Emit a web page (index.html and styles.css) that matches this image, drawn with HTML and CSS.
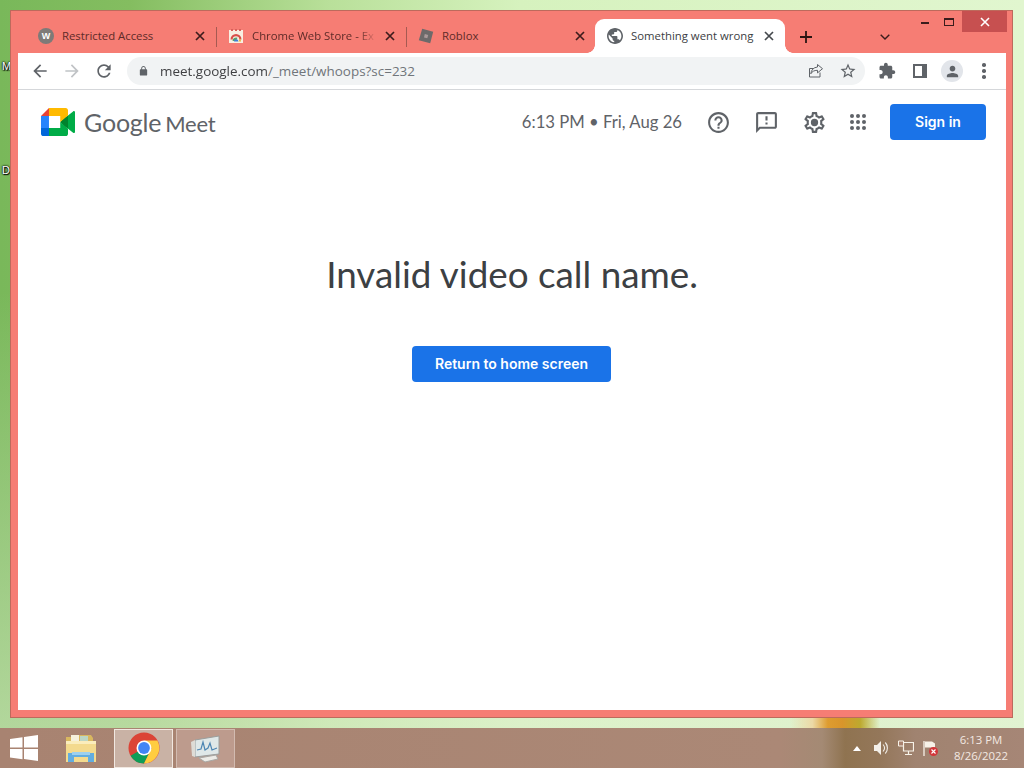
FILE: index.html
```html
<!DOCTYPE html>
<html lang="en">
<head>
<meta charset="utf-8">
<title>Something went wrong</title>
<link rel="stylesheet" href="styles.css">
</head>
<body>
<div class="screen">
  <main class="desktop">
    <span class="desk-label desk-label-m">M</span>
    <span class="desk-label desk-label-d">D</span>
    <div class="blob"></div>
    <section class="window">
      <div class="winctl">
        <span class="winbtn"><span class="min-glyph"></span></span>
        <span class="winbtn"><span class="max-glyph"></span></span>
        <span class="winbtn winbtn-close"><svg viewBox="0 0 10 10" width="10" height="10"><path d="M1 1l8 8M9 1l-8 8" stroke="#fff" stroke-width="1.6"/></svg></span>
      </div>
      <div class="tabstrip">
        <div class="tab">
          <span class="fav-w">W</span>
          <span class="tab-title">Restricted Access</span>
          <svg class="tab-x" viewBox="0 0 10 10"><path d="M1 1l8 8M9 1l-8 8"/></svg>
        </div>
        <div class="tab">
          <svg class="fav" viewBox="0 0 16 16"><rect x="1" y="2" width="14" height="13" fill="#f8efe2"/><path d="M3 1h2v2H3zM7 1h2v2H7zM11 1h2v2h-2z" fill="#d9605a"/><path d="M2.500 11.500a5.500 5.500 0 0 1 11 0h-2.200a3.300 3.300 0 0 0-6.600 0z" fill="#d8504a"/><path d="M4.500 13a3.500 3.500 0 0 1 5-3.200L8 13z" fill="#5aa16a"/><path d="M6 13.500a2.200 2.200 0 0 1 4.400 0z" fill="#3f7fd8"/><path d="M10.400 13.500h2.600a4 4 0 0 0-1-3z" fill="#e8b93b"/></svg>
          <span class="tab-title tab-fade">Chrome Web Store - Ex</span>
          <svg class="tab-x" viewBox="0 0 10 10"><path d="M1 1l8 8M9 1l-8 8"/></svg>
        </div>
        <div class="tab">
          <svg class="fav" viewBox="0 0 16 16"><path d="M4.200 .8L15.200 3.800 12.200 15.200 .8 12.200z" fill="#6d6a6a"/><path d="M6.800 6L10.200 6.900 9.300 10.200 6 9.400z" fill="#a99"/></svg>
          <span class="tab-title">Roblox</span>
          <svg class="tab-x" viewBox="0 0 10 10"><path d="M1 1l8 8M9 1l-8 8"/></svg>
        </div>
        <div class="tab tab-active">
          <svg class="fav" viewBox="2 2 20 20"><path fill="#5f6368" d="M12 2C6.480 2 2 6.480 2 12s4.480 10 10 10 10-4.480 10-10S17.520 2 12 2zm-1 17.930c-3.950-.49-7-3.850-7-7.930 0-.62.08-1.210.21-1.790L9 15v1c0 1.100.9 2 2 2v1.930zm6.900-2.540c-.26-.81-1-1.390-1.900-1.390h-1v-3c0-.55-.45-1-1-1H8v-2h2c.55 0 1-.45 1-1V7h2c1.100 0 2-.9 2-2v-.41c2.930 1.190 5 4.060 5 7.410 0 2.080-.8 3.970-2.100 5.390z"/></svg>
          <span class="tab-title">Something went wrong</span>
          <svg class="tab-x" viewBox="0 0 10 10"><path d="M1 1l8 8M9 1l-8 8"/></svg>
        </div>
        <svg class="newtab" viewBox="0 0 12 12"><path d="M6 0v12M0 6h12"/></svg>
        <svg class="tabsearch" viewBox="0 0 10 6"><path d="M.7 .7L5 5l4.300-4.300"/></svg>
      </div>
      <div class="toolbar">
        <svg class="tool tool-nav" viewBox="0 0 24 24"><path d="M20 11H7.830l5.590-5.590L12 4l-8 8 8 8 1.410-1.410L7.830 13H20v-2z"/></svg>
        <svg class="tool tool-nav tool-off" viewBox="0 0 24 24"><path d="M12 4l-1.410 1.410L16.170 11H4v2h12.170l-5.580 5.590L12 20l8-8z"/></svg>
        <svg class="tool tool-nav" viewBox="0 0 24 24"><path d="M17.650 6.350C16.200 4.900 14.210 4 12 4c-4.420 0-7.990 3.580-7.990 8s3.570 8 7.990 8c3.730 0 6.840-2.550 7.730-6h-2.080c-.82 2.330-3.040 4-5.650 4-3.310 0-6-2.690-6-6s2.690-6 6-6c1.660 0 3.140.69 4.220 1.780L13 11h7V4l-2.350 2.350z"/></svg>
        <div class="omnibox">
          <svg class="lock" viewBox="0 0 24 24"><path d="M18 8h-1V6c0-2.760-2.240-5-5-5S7 3.240 7 6v2H6c-1.100 0-2 .9-2 2v10c0 1.100.9 2 2 2h12c1.100 0 2-.9 2-2V10c0-1.100-.9-2-2-2zM9 6c0-1.660 1.340-3 3-3s3 1.340 3 3v2H9V6z"/></svg>
          <span class="url"><span class="url-host">meet.google.com</span>/_meet/whoops?sc=232</span>
          <svg class="share" viewBox="0 0 16 16"><path d="M9.500 1.500l5 4.200-5 4.200V7.300C6 7.300 4 8.600 2.800 10.800 3.200 7 5.400 4.400 9.500 4z M12 9.500v4.500H1.500V5.500H5" fill="none" stroke="#5f6368" stroke-width="1"/></svg>
          <svg class="star" viewBox="0 0 24 24"><path d="M22 9.240l-7.190-.62L12 2 9.190 8.630 2 9.240l5.460 4.730L5.820 21 12 17.270 18.180 21l-1.630-7.030L22 9.240zM12 15.400l-3.760 2.270 1-4.280-3.320-2.880 4.380-.38L12 6.100l1.710 4.040 4.380.38-3.320 2.880 1 4.280L12 15.400z"/></svg>
        </div>
        <svg class="puzzle" viewBox="0 0 24 24"><path d="M20.500 11H19V7c0-1.100-.9-2-2-2h-4V3.500C13 2.120 11.880 1 10.500 1S8 2.120 8 3.500V5H4c-1.100 0-1.990.9-1.990 2v3.800H3.500c1.490 0 2.700 1.210 2.700 2.700s-1.210 2.700-2.700 2.700H2V20c0 1.100.9 2 2 2h3.800v-1.500c0-1.490 1.210-2.700 2.700-2.700 1.490 0 2.700 1.210 2.700 2.700V22H17c1.100 0 2-.9 2-2v-4h1.500c1.380 0 2.500-1.120 2.500-2.500S21.880 11 20.500 11z"/></svg>
        <span class="sidepanel"><span class="sidepanel-fill"></span></span>
        <span class="avatar"><svg viewBox="0 0 24 24"><path d="M12 12c2.210 0 4-1.790 4-4s-1.790-4-4-4-4 1.790-4 4 1.790 4 4 4zm0 2c-2.670 0-8 1.340-8 4v2h16v-2c0-2.660-5.330-4-8-4z"/></svg></span>
        <span class="kebab"><i></i><i></i><i></i></span>
      </div>
      <div class="page">
        <header class="meet-header">
          <svg class="meet-logo" viewBox="0 0 87.500 72">
            <path fill="#00832d" d="M49.500 36l8.530 9.750 11.470 7.330 2-17.020-2-16.640-11.690 6.440z"/>
            <path fill="#0066da" d="M0 51.500V66c0 3.315 2.685 6 6 6h14.500l3-10.960-3-9.540-9.950-3z"/>
            <path fill="#e94235" d="M20.500 0L0 20.500l10.550 3 9.950-3 2.950-9.410z"/>
            <path fill="#2684fc" d="M20.500 20.500H0v31h20.500z"/>
            <path fill="#00ac47" d="M82.600 8.680L69.500 19.420v33.660l13.160 10.790c1.970 1.540 4.850.135 4.850-2.370V11c0-2.535-2.945-3.925-4.910-2.320zM49.500 36v15.500h-29V72h43c3.315 0 6-2.685 6-6V53.080z"/>
            <path fill="#ffba00" d="M63.500 0h-43v20.500h29V36l20-16.570V6c0-3.315-2.685-6-6-6z"/>
          </svg>
          <span class="wordmark"><span class="wordmark-google">Google</span> <span class="wordmark-meet">Meet</span></span>
          <span class="clock">6:13 PM • Fri, Aug 26</span>
          <div class="header-icons">
            <svg viewBox="0 0 24 24"><path d="M11 18h2v-2h-2v2zm1-16C6.480 2 2 6.480 2 12s4.480 10 10 10 10-4.480 10-10S17.520 2 12 2zm0 18c-4.410 0-8-3.590-8-8s3.590-8 8-8 8 3.590 8 8-3.590 8-8 8zm0-14c-2.210 0-4 1.790-4 4h2c0-1.100.9-2 2-2s2 .9 2 2c0 2-3 1.750-3 5h2c0-2.250 3-2.500 3-5 0-2.210-1.790-4-4-4z"/></svg>
            <svg viewBox="0 0 24 24"><path d="M20 2H4c-1.100 0-2 .9-2 2v18l4-4h14c1.100 0 2-.9 2-2V4c0-1.100-.9-2-2-2zm0 14H5.170L4 17.170V4h16v12zM11 12h2v2h-2zm0-6h2v4h-2z"/></svg>
            <svg viewBox="0 0 24 24"><path d="M19.430 12.980c.04-.32.07-.64.07-.98s-.03-.66-.07-.98l2.110-1.650c.19-.15.24-.42.12-.64l-2-3.460c-.12-.22-.39-.3-.61-.22l-2.490 1c-.52-.4-1.080-.73-1.690-.98l-.38-2.650C14.460 2.180 14.250 2 14 2h-4c-.25 0-.46.18-.49.42l-.38 2.650c-.61.25-1.170.59-1.690.98l-2.490-1c-.23-.09-.49 0-.61.22l-2 3.460c-.13.22-.07.49.12.64l2.110 1.650c-.04.32-.07.65-.07.98s.03.66.07.98l-2.110 1.650c-.19.15-.24.42-.12.64l2 3.460c.12.22.39.3.61.22l2.490-1c.52.4 1.080.73 1.690.98l.38 2.650c.03.24.24.42.49.42h4c.25 0 .46-.18.49-.42l.38-2.650c.61-.25 1.170-.59 1.690-.98l2.490 1c.23.09.49 0 .61-.22l2-3.460c.12-.22.07-.49-.12-.64l-2.110-1.650zM17.450 11.270c.04.31.05.52.05.73 0 .21-.02.43-.05.73l-.14 1.130.89.7 1.080.84-.7 1.210-1.270-.51-1.040-.42-.9.68c-.43.32-.84.56-1.250.73l-1.060.43-.16 1.130-.2 1.350h-1.400l-.19-1.350-.16-1.130-1.060-.43c-.43-.18-.83-.41-1.230-.71l-.91-.7-1.060.43-1.270.51-.7-1.210 1.080-.84.89-.7-.14-1.130C6.520 12.430 6.500 12.200 6.500 12s.02-.43.05-.72l.14-1.130-.89-.7-1.080-.84.7-1.210 1.270.51 1.040.42.9-.68c.43-.32.84-.56 1.250-.73l1.060-.43.16-1.130.2-1.350h1.390l.19 1.350.16 1.130 1.060.43c.43.18.83.41 1.230.71l.91.7 1.060-.43 1.270-.51.7 1.210-1.070.85-.89.7.14 1.130zM12 8.500a3.500 3.500 0 1 0 0 7 3.500 3.500 0 0 0 0-7z"/></svg>
            <span class="apps"><i></i><i></i><i></i><i></i><i></i><i></i><i></i><i></i><i></i></span>
          </div>
          <a class="btn btn-signin">Sign in</a>
        </header>
        <div class="message">
          <h1 class="message-title">Invalid video call name.</h1>
          <a class="btn btn-return">Return to home screen</a>
        </div>
      </div>
    </section>
  </main>
  <footer class="taskbar">
    <svg class="start" viewBox="0 0 28 26"><path d="M0 4l12.500-1.800v10.200H0zM14 2l14-2v12.400H14zM0 14h12.500v10.200L0 22.400zM14 14h14v12l-14-2z" fill="#fff"/></svg>
    <svg class="folder" viewBox="0 0 32 30">
      <path d="M1 4h8l2-2h15l2 3v6H1z" fill="#d9b860"/>
      <path d="M6 2h8v6H6z" fill="#f6f1dc"/><path d="M15 3h8v5h-8z" fill="#bcd6c4"/>
      <path d="M1 8h30v21H1z" fill="#f3da8e"/>
      <path d="M1 8h30v3H1z" fill="#faedbc"/>
      <path d="M3 20h26v9h-6v-5H9v5H3z" fill="#62ade0"/>
      <path d="M7 19h18v3H7z" fill="#9cd0ef"/>
    </svg>
    <div class="task task-active">
      <svg class="chrome" viewBox="0 0 32 32">
        <circle cx="16" cy="16" r="15.500" fill="#db4437"/>
        <path d="M16 16L2.600 23.700A15.500 15.500 0 0 0 16 31.500L23.700 16z" fill="#0f9d58"/>
        <path d="M16 8.500h13.400A15.500 15.500 0 0 1 16 31.500L23.700 16z" fill="#ffcd40"/>
        <circle cx="16" cy="16" r="7.500" fill="#fff"/>
        <circle cx="16" cy="16" r="5.900" fill="#4285f4"/>
      </svg>
    </div>
    <div class="task">
      <svg class="taskmgr" viewBox="0 0 32 30">
        <path d="M5 7L29 3v18L5 24z" fill="#dfe8e8" stroke="#9a9e9d"/>
        <path d="M7 17l4-1 2-7 2 8 3-2 2-5 2 7 5-2" fill="none" stroke="#4d86b3" stroke-width="1.200"/>
        <path d="M1 9l4-2v17l-3-1z" fill="#dedcd6"/>
        <path d="M9 25l17-3 2 4-13 3z" fill="#ecebe6" stroke="#a8a8a4"/>
      </svg>
    </div>
    <div class="tray">
      <svg class="tray-up" viewBox="0 0 8 5"><path d="M4 0l4 5H0z" fill="#fff"/></svg>
      <svg class="tray-sound" viewBox="0 0 16 16"><path d="M1 5h3l4-4v14l-4-4H1z" fill="#f3efe9"/><path d="M10 4.500c1.800 2 1.800 5 0 7M12.300 2.500c2.800 3 2.800 8 0 11" fill="none" stroke="#f3efe9" stroke-width="1.100"/></svg>
      <svg class="tray-net" viewBox="0 0 16 16"><path d="M5.500 2.500h10v8.500h-10z M10.500 11v3M7 14.500h7" fill="none" stroke="#f7f2e8" stroke-width="1.200"/><path d="M.5 1h5v5h-5z" fill="#a8826f" stroke="#f7f2e8"/></svg>
      <svg class="tray-flag" viewBox="0 0 16 16"><path d="M2 1v15" stroke="#f7f2e8" stroke-width="1.300"/><path d="M3 1.500h7l3 2v4H3z" fill="#f7f2e8"/><circle cx="11.500" cy="11.500" r="4.500" fill="#d2363a"/><path d="M9.500 9.500l4 4M13.500 9.500l-4 4" stroke="#fff" stroke-width="1.100"/></svg>
      <div class="tray-clock"><span>6:13 PM</span><span>8/26/2022</span></div>
    </div>
  </footer>
</div>
</body>
</html>
```

FILE: styles.css
```css
* { box-sizing: border-box; }
html, body { margin: 0; padding: 0; }
body { width: 1024px; height: 768px; overflow: hidden; font-family: "Open Sans", "Liberation Sans", sans-serif; }
.screen { width: 1024px; height: 768px; display: flex; flex-direction: column; }

/* Desktop */
.desktop {
  position: relative;
  height: 728px;
  overflow: hidden;
  background:
    linear-gradient(90deg, #79b85a 0, #84bd60 130px, #b9e09a 330px, #d6f2be 520px, #e1f6cf 1024px);
}
.desktop::after {
  content: "";
  position: absolute;
  inset: 0;
  background: linear-gradient(180deg, rgba(225, 246, 207, 0) 40%, rgba(225, 240, 210, .55) 100%);
}
.desk-label { position: absolute; left: 2px; z-index: 1; font: 11px "Liberation Sans", sans-serif; color: #fff; text-shadow: 0 0 2px #000, 0 0 2px #000, 1px 1px 1px #000; }
.desk-label-m { top: 60px; }
.desk-label-d { top: 164px; }
.blob {
  position: absolute; z-index: 1; left: 790px; top: 716px; width: 90px; height: 12px;
  background: linear-gradient(90deg, rgba(236, 225, 180, 0), #ecd9a6 25%, #de9c30 42%, #d9952b 58%, #bda92f 78%, rgba(200, 225, 160, 0));
}

/* Window */
.window {
  position: absolute; z-index: 2;
  left: 10px; top: 10px; width: 1003px; height: 708px;
  background: #f67d74;
  border: 1px solid #bd6a5c;
  padding: 0 6px 7px 7px;
  display: flex; flex-direction: column;
}
.winctl { position: absolute; top: 0; right: 5px; display: flex; height: 21px; }
.winbtn { width: 25px; display: flex; align-items: center; justify-content: center; }
.winbtn-close { width: 45px; background: #c75050; }
.min-glyph { width: 8px; height: 2px; background: #3a1c1c; margin-top: 3px; }
.max-glyph { width: 10px; height: 8px; border: 1px solid #3a1c1c; border-top-width: 2px; margin-right: 2px; }

/* Tabs */
.tabstrip { height: 42px; display: flex; align-items: flex-end; padding-left: 9px; }
.tab {
  width: 190px; height: 34px; flex: none;
  display: flex; align-items: center; gap: 8px;
  padding: 0 12px 0 11px;
  position: relative;
  color: #5e2b28;
  font-size: 11.350px;
  background-clip: content-box;
}
.tab::after { content: ""; position: absolute; right: 0; top: 8px; height: 20px; width: 1px; background: #a65a52; }
.tab:nth-child(3)::after { display: none; }
.tab-active { background: #fff; border-radius: 9px 9px 0 0; color: #3c4043; margin-left: -2px; padding: 0 11px 0 12px; }
.tab-active::before, .tab-active::after {
  content: ""; position: absolute; top: auto; bottom: 0; width: 8px; height: 8px;
  background: radial-gradient(circle at 0 0, transparent 7.500px, #fff 8px);
}
.tab-active::before { left: -8px; }
.tab-active::after { display: block; right: -8px; background: radial-gradient(circle at 100% 0, transparent 7.500px, #fff 8px); }
.fav, .fav-w { width: 16px; height: 16px; flex: none; }
.fav-w { border-radius: 50%; background: #7e7a78; color: #fff; font: bold 9px/16px "Liberation Sans", sans-serif; text-align: center; }
.tab-title { flex: 1; min-width: 0; white-space: nowrap; line-height: 16px; }
.tab-fade { -webkit-mask-image: linear-gradient(90deg, #000 85%, transparent 100%); mask-image: linear-gradient(90deg, #000 85%, transparent 100%); }
.tab-x { width: 10px; height: 10px; flex: none; fill: none; stroke: #3d1c1c; stroke-width: 1.700; }
.tab-active .tab-x { stroke: #45494d; }
.newtab { width: 12px; height: 12px; flex: none; margin: 0 0 10px 15px; fill: none; stroke: #2a1412; stroke-width: 1.800; }
.tabsearch { width: 10px; height: 6px; flex: none; margin: 0 0 13px 68px; fill: none; stroke: #3a1c1c; stroke-width: 1.400; }

/* Toolbar */
.toolbar { height: 37px; background: #fff; border-bottom: 1px solid #d5d7da; display: flex; align-items: center; padding: 0 13px 0 12px; flex: none; }
.tool { width: 20px; height: 20px; flex: none; fill: #5f6368; }
.tool-nav { margin-right: 12px; }
.tool-off { fill: #c0c3c6; }
.omnibox { width: 738px; height: 28px; margin-left: 1px; border-radius: 14px; background: #f1f3f4; display: flex; align-items: center; padding: 0 6px 0 11px; flex: none; }
.lock { width: 11px; height: 12px; flex: none; fill: #5f6368; }
.url { flex: 1; margin-left: 11px; font-size: 13.450px; color: #70757a; white-space: nowrap; }
.url-host { color: #202124; opacity: .85; }
.share { width: 16px; height: 16px; flex: none; margin-right: 15px; }
.star { width: 18px; height: 18px; flex: none; fill: #5f6368; margin-right: 2px; }
.puzzle { width: 18px; height: 18px; flex: none; fill: #5f6368; margin-left: 13px; }
.sidepanel { width: 14px; height: 14px; flex: none; border: 2px solid #5f6368; margin-left: 17px; display: flex; justify-content: flex-end; }
.sidepanel-fill { width: 3px; background: #5f6368; }
.avatar { width: 22px; height: 22px; flex: none; border-radius: 50%; background: #e2e5ea; margin-left: 14px; display: flex; align-items: center; justify-content: center; }
.avatar svg { width: 17px; height: 17px; fill: #5f6368; }
.kebab { width: 4px; flex: none; margin-left: 19px; display: flex; flex-direction: column; gap: 2.500px; }
.kebab i { display: block; width: 3.500px; height: 3.500px; border-radius: 50%; background: #5f6368; }

/* Page */
.page { flex: 1; background: #fff; display: flex; flex-direction: column; min-height: 0; }
.meet-header { display: flex; align-items: center; height: 64px; padding: 0 20px 0 23px; flex: none; }
.meet-logo { width: 34px; height: 28px; flex: none; }
.wordmark { margin-left: 9px; color: #5f6368; font-family: "Lato", sans-serif; white-space: nowrap; letter-spacing: -.2px; }
.wordmark-google { font-size: 25px; }
.wordmark-meet { font-size: 22px; }
.clock { margin-left: auto; font-family: "Lato", sans-serif; font-size: 16.700px; color: #5f6368; white-space: nowrap; }
.header-icons { display: flex; align-items: center; gap: 23px; margin-left: 24px; }
.header-icons svg { width: 25px; height: 25px; fill: #5f6368; flex: none; }
.apps { width: 16px; display: grid; grid-template-columns: repeat(3, 4px); gap: 2px; margin-left: 0; }
.apps i { width: 4px; height: 4px; border-radius: 50%; background: #5f6368; }
.btn { display: flex; align-items: center; justify-content: center; height: 36px; border-radius: 4px; background: #1a73e8; color: #fff; font-family: "Inter", sans-serif; font-size: 14px; font-weight: 600; white-space: nowrap; flex: none; padding-bottom: 1px; }
.btn-signin { width: 96px; margin-left: 24px; }
.btn-return { width: 199px; margin-right: 1px; }
.message { display: flex; flex-direction: column; align-items: center; padding-top: 96px; }
.message-title { margin: 0 0 48px; font-family: "Lato", sans-serif; font-weight: 400; font-size: 36.800px; line-height: 48px; color: #3c4043; white-space: nowrap; }

/* Taskbar */
.taskbar {
  height: 40px; display: flex; align-items: center; flex: none; position: relative;
  background: linear-gradient(90deg, #a88371 0, #ab8876 780px, #a48a74 822px, #8f7350 845px, #94775a 880px, #a08370 915px, #a68676 1024px);
}
.start { width: 28px; height: 26px; flex: none; margin-left: 10px; }
.folder { width: 32px; height: 30px; flex: none; margin-left: 27px; }
.task { width: 59px; height: 39px; flex: none; margin-left: 3px; display: flex; align-items: center; justify-content: center; background: #bd9b8d; border: 1px solid #d2bbb0; }
.task-active { margin-left: 17px; background: #c9b2a5; border-color: #f1e8e1; }
.chrome { width: 32px; height: 32px; }
.taskmgr { width: 32px; height: 30px; }
.tray { margin-left: auto; display: flex; align-items: center; height: 100%; }
.tray-up { width: 8px; height: 5px; flex: none; }
.tray-sound { width: 16px; height: 16px; flex: none; margin-left: 12px; }
.tray-net { width: 16px; height: 16px; flex: none; margin-left: 9px; }
.tray-flag { width: 16px; height: 16px; flex: none; margin-left: 8px; }
.tray-clock { width: 86px; display: flex; flex-direction: column; align-items: center; font-size: 11.400px; line-height: 16px; color: #f3e9e2; }
```
